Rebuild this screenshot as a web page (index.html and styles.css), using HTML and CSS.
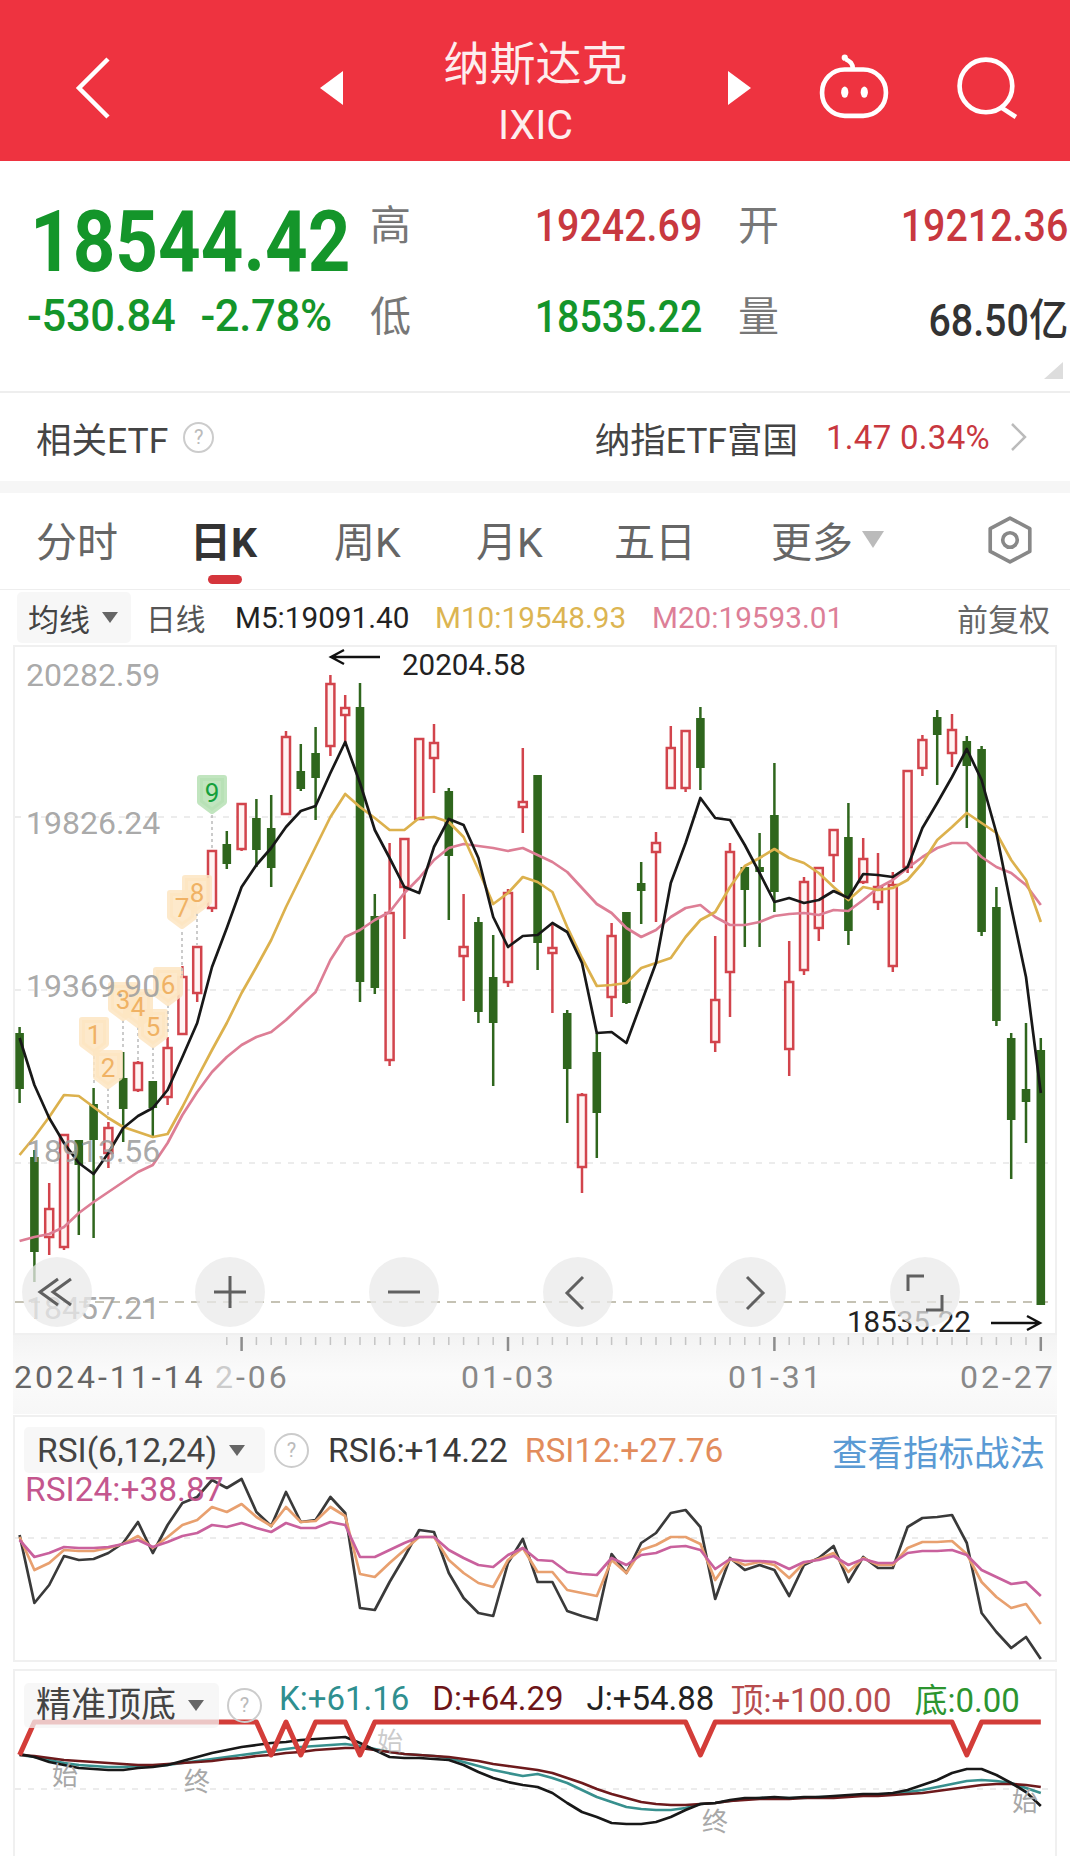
FILE: index.html
```html
<!DOCTYPE html>
<html lang="zh-CN">
<head>
    <meta charset="UTF-8">
    <meta name="viewport" content="width=device-width, initial-scale=1.0">
    <title>纳斯达克 IXIC</title>
    <link rel="stylesheet" href="styles.css">
</head>
<body>
    <header class="topbar">
        <div class="back">
            <svg width="36" height="62" viewBox="0 0 36 62"><path d="M33 2 L4 31 L33 60" class="icon-white"/></svg>
        </div>
        <div class="tri tri-left"></div>
        <div class="title">
            <div class="title-name">纳斯达克</div>
            <div class="title-code">IXIC</div>
        </div>
        <div class="tri tri-right"></div>
        <svg class="robot" width="70" height="65" viewBox="0 0 68 63">
            <rect x="3" y="15" width="62" height="45" rx="22" class="icon-white"/>
            <path d="M33 15 C33 9 30 7 26 5" class="icon-white"/>
            <circle cx="25" cy="3.5" r="3" fill="#fff"/>
            <ellipse cx="25" cy="37" rx="3.5" ry="5.5" fill="#fff"/>
            <ellipse cx="44" cy="37" rx="3.5" ry="5.5" fill="#fff"/>
        </svg>
        <svg class="search" width="62" height="62" viewBox="0 0 60 60">
            <circle cx="28" cy="28" r="25.5" class="icon-white"/>
            <path d="M43 49 L57 58" class="icon-white"/>
        </svg>
    </header>

    <section class="quote">
        <div class="price down"><span>18544.42</span></div>
        <div class="stat"><span class="stat-label">高</span><span class="stat-value up">19242.69</span></div>
        <div class="stat"><span class="stat-label">开</span><span class="stat-value up">19212.36</span></div>
        <div class="change down"><span>-530.84</span><span>-2.78%</span></div>
        <div class="stat"><span class="stat-label">低</span><span class="stat-value down">18535.22</span></div>
        <div class="stat"><span class="stat-label">量</span><span class="stat-value dark">68.50亿</span></div>
        <div class="corner"></div>
    </section>

    <section class="etf">
        <span class="etf-title">相关ETF</span>
        <span class="help"><i>?</i></span>
        <span class="etf-name">纳指ETF富国</span>
        <span class="etf-num up">1.47 0.34%</span>
        <svg width="17" height="30" viewBox="0 0 17 30"><path d="M2 2 L15 15 L2 28" class="icon-grey"/></svg>
    </section>

    <nav class="tabs">
        <span>分时</span>
        <span class="tab-on">日K</span>
        <span>周K</span>
        <span>月K</span>
        <span>五日</span>
        <span class="tab-more">更多<b class="caret caret-big"></b></span>
        <svg class="hex" width="50" height="50" viewBox="0 0 48 46">
            <path d="M24 2 L43 12 L43 34 L24 44 L5 34 L5 12 Z" class="icon-hex"/>
            <circle cx="24" cy="23" r="7" class="icon-hex"/>
        </svg>
    </nav>

    <div class="ma-bar">
        <span class="pill ma-pill">均线<b class="caret"></b></span>
        <span class="grey">日线</span>
        <span class="c-black">M5:19091.40</span>
        <span class="c-gold">M10:19548.93</span>
        <span class="c-pink">M20:19593.01</span>
        <span class="ma-right">前复权</span>
    </div>

    <div class="chart-box kline">
        <svg class="plot" viewBox="15 647 1040 686">
            <g class="grid">
                <line x1="15" x2="1055" y1="817" y2="817"/>
                <line x1="15" x2="1055" y1="990" y2="990"/>
                <line x1="15" x2="1055" y1="1163" y2="1163"/>
            </g>
            <line class="low-line" x1="15" x2="1055" y1="1302" y2="1302"/>
            <g id="candles"></g>
            <g id="badges"></g>
            <g id="maLines"></g>
            <g class="axis-label">
                <text x="26" y="686">20282.59</text>
                <text x="26" y="834">19826.24</text>
                <text x="26" y="997">19369.90</text>
                <text x="26" y="1162">18913.56</text>
                <text x="26" y="1319">18457.21</text>
            </g>
            <text class="mark-label" x="402" y="675">20204.58</text>
            <path class="arrow" d="M380 657 L331 657 M344 650 L331 657 L344 664"/>
            <text class="mark-label" x="847" y="1332">18535.22</text>
            <path class="arrow" d="M991 1323 L1040 1323 M1027 1316 L1040 1323 L1027 1330"/>

            <g class="zoom-btn">
                <circle cx="57" cy="1292" r="35"/>
                <path d="M58 1279 L40 1292 L58 1305 M71 1279 L53 1292 L71 1305"/>
            </g>
            <g class="zoom-btn">
                <circle cx="230" cy="1292" r="35"/>
                <path d="M214 1292 L246 1292 M230 1276 L230 1308"/>
            </g>
            <g class="zoom-btn">
                <circle cx="404" cy="1292" r="35"/>
                <path d="M388 1292 L420 1292"/>
            </g>
            <g class="zoom-btn">
                <circle cx="578" cy="1292" r="35"/>
                <path d="M583 1277 L567 1293 L583 1309"/>
            </g>
            <g class="zoom-btn">
                <circle cx="751" cy="1292" r="35"/>
                <path d="M747 1277 L763 1293 L747 1309"/>
            </g>
            <g class="zoom-btn">
                <circle cx="925" cy="1292" r="35"/>
                <path d="M908 1291 L908 1276 L924 1276 M942 1295 L942 1310 L926 1310"/>
            </g>
        </svg>
    </div>

    <div class="date-strip">
        <svg class="plot" viewBox="13 1335 1044 79">
            <g id="ticks"></g>
            <text class="date first" x="14" y="1388">2024-11-14</text>
            <text class="date" x="215" y="1388"><tspan class="date-fade">2</tspan>-06</text>
            <text class="date" x="461" y="1388">01-03</text>
            <text class="date" x="728" y="1388">01-31</text>
            <text class="date" x="960" y="1388">02-27</text>
        </svg>
    </div>

    <div class="chart-box rsi">
        <svg class="plot" viewBox="15 1417 1040 243">
            <line class="grid-line" x1="15" x2="1055" y1="1538" y2="1538"/>
            <g id="rsiLines"></g>
        </svg>
        <div class="legend">
            <span class="pill rsi-pill">RSI(6,12,24)<b class="caret"></b></span>
            <span class="help"><i>?</i></span>
            <span class="c-dark rsi-6">RSI6:+14.22</span>
            <span class="c-orange">RSI12:+27.76</span>
            <span class="link">查看指标战法</span>
        </div>
        <div class="rsi-24">RSI24:+38.87</div>
    </div>

    <div class="chart-box kd">
        <svg class="plot" viewBox="15 1671 1040 185">
            <line class="grid-line" x1="15" x2="1055" y1="1789" y2="1789"/>
            <g id="kdLines"></g>
            <g class="kd-tag">
                <text x="52" y="1785">始</text>
                <text x="184" y="1791">终</text>
                <text class="tag-faint" x="377" y="1751">始</text>
                <text x="702" y="1831">终</text>
                <text x="1012" y="1811">始</text>
            </g>
        </svg>
        <div class="legend kd-legend">
            <span class="pill kd-pill">精准顶底<b class="caret"></b></span>
            <span class="help"><i>?</i></span>
            <span class="c-teal">K:+61.16</span>
            <span class="c-maroon">D:+64.29</span>
            <span class="c-black">J:+54.88</span>
            <span class="c-top">顶:+100.00</span>
            <span class="c-bottom">底:0.00</span>
        </div>
    </div>

    <script src="chart.js"></script>
</body>
</html>
```

FILE: styles.css
```css
* {
    box-sizing: border-box;
}

html, body {
    margin: 0;
    padding: 0;
}

body {
    width: 1070px;
    height: 1856px;
    overflow: hidden;
    background-color: #fff;
    color: #333;
    font-family: Roboto, "Noto Sans CJK SC", sans-serif;
}

b, i {
    font-style: normal;
}

.up { color: #c8383f; }
.down { color: #14952a; }
.dark { color: #333; }
.grey { color: #555; }

.c-black { color: #222; }
.c-dark { color: #3a3a3a; }
.c-gold { color: #dcb552; }
.c-pink { color: #dd7f98; }
.c-orange { color: #e28c5c; }
.c-teal { color: #2f8f8f; }
.c-maroon { color: #6d1518; }
.c-top { color: #b74c4e; }
.c-bottom { color: #2c952f; }

/* top bar */
.topbar {
    height: 161px;
    display: flex;
    align-items: center;
    background-color: #ee3340;
    color: #fdeeee;
}

.back {
    width: 320px;
    padding: 14px 0 0 75px;
    display: flex;
}

.icon-white {
    fill: none;
    stroke: #fff;
    stroke-width: 4.5;
}

.tri {
    width: 0;
    height: 0;
    margin-top: 14px;
    border-top: 17px solid transparent;
    border-bottom: 17px solid transparent;
}

.tri-left {
    border-right: 23px solid #fff;
}

.tri-right {
    border-left: 23px solid #fff;
}

.title {
    width: 385px;
    align-self: flex-start;
    padding-top: 39px;
    text-align: center;
}

.title-name {
    font-size: 46px;
    line-height: 50px;
}

.title-code {
    font-size: 41px;
    line-height: 48px;
    margin-top: 12px;
}

.robot {
    margin-left: 68px;
    margin-top: 12px;
}

.search {
    margin-left: 68px;
    margin-top: 14px;
}

/* quote block */
.quote {
    position: relative;
    height: 232px;
    padding: 40px 2px 0 27px;
    display: grid;
    grid-template-columns: 307px 330px 328px;
    grid-template-rows: 50px 50px;
    column-gap: 38px;
    row-gap: 41px;
    border-bottom: 2px solid #eee;
}

.price {
    font-size: 86px;
    line-height: 82px;
    height: 50px;
    margin-left: 3px;
    font-weight: bold;
}

.price span {
    display: inline-block;
    transform: scaleX(0.865);
    transform-origin: left center;
}

.change {
    display: flex;
    gap: 25px;
    font-size: 43.5px;
    line-height: 50px;
    font-weight: 500;
    letter-spacing: -0.3px;
}

.stat {
    display: flex;
    justify-content: space-between;
    align-items: center;
}

.stat-label {
    margin: -8px 0 0 -2px;
    font-size: 41px;
    color: #777;
}

.stat-value {
    font-size: 44px;
    font-weight: 500;
    transform: scaleX(0.895);
    transform-origin: right center;
}

.corner {
    position: absolute;
    right: 7px;
    top: 201px;
    border-left: 19px solid transparent;
    border-bottom: 17px solid #ddd;
}

/* etf row */
.etf {
    height: 88px;
    padding: 0 43px 0 36px;
    display: flex;
    align-items: center;
    font-size: 35.5px;
    color: #444;
}

.help {
    width: 31px;
    height: 31px;
    border: 2px solid #ccc;
    border-radius: 50%;
    display: flex;
    align-items: center;
    justify-content: center;
    font-size: 20px;
    color: #bbb;
}

.etf .help {
    margin-left: 15px;
}

.etf-name {
    margin-left: auto;
}

.etf-num {
    margin: 0 20px 0 28px;
    font-size: 33px;
    letter-spacing: 0.3px;
}

.icon-grey {
    fill: none;
    stroke: #bbb;
    stroke-width: 2.5;
}

/* tabs */
.tabs {
    height: 109px;
    padding: 0 0 4px 36px;
    display: grid;
    grid-template-columns: 158px 140px 142px 138px 157px 217px 1fr;
    align-items: center;
    border-top: 12px solid #f6f6f6;
    border-bottom: 1px solid #eee;
    font-size: 41px;
    color: #666;
}

.tab-on {
    position: relative;
    margin-left: -4px;
    color: #333;
    font-weight: bold;
}

.tab-on::after {
    content: "";
    position: absolute;
    left: 18px;
    top: 66px;
    width: 34px;
    height: 9px;
    border-radius: 5px;
    background-color: #d5353c;
}

.tab-more {
    display: flex;
    align-items: center;
}

.caret {
    display: inline-block;
    margin-left: 12px;
    border-left: 8px solid transparent;
    border-right: 8px solid transparent;
    border-top: 11px solid #666;
}

.caret-big {
    margin-left: 9px;
    border-left-width: 11px;
    border-right-width: 11px;
    border-top: 17px solid #bbb;
}

.hex {
    margin: 2px 0 0 -3px;
}

.icon-hex {
    fill: none;
    stroke: #888;
    stroke-width: 3.5;
    stroke-linejoin: round;
}

/* moving average bar */
.ma-bar {
    height: 55px;
    padding: 1px 20px 2px 17px;
    display: grid;
    grid-template-columns: 129px 89px 200px 217px 1fr auto;
    align-items: center;
    font-size: 29.7px;
}

.pill {
    display: flex;
    align-items: center;
    border-radius: 5px;
    background-color: rgba(244, 244, 244, 0.75);
    color: #444;
}

.ma-pill {
    width: 114px;
    height: 51px;
    padding-left: 11px;
    font-size: 31px;
}

.ma-right {
    font-size: 31px;
    color: #666;
}

/* chart boxes */
.chart-box {
    position: relative;
    margin: 0 13px;
    border: 2px solid #f0f0f0;
}

.plot {
    position: absolute;
    left: 0;
    top: 0;
    width: 100%;
    height: 100%;
    overflow: visible;
}

.kline {
    height: 690px;
}

.grid line, .grid-line {
    stroke: #e6e6e6;
    stroke-width: 1.5;
    stroke-dasharray: 6 7;
}

.low-line {
    stroke: #b3ae9c;
    stroke-width: 1.5;
    stroke-dasharray: 9 7;
}

.wick-up, .body-up {
    stroke: #d2444c;
}

.wick-up, .wick-down {
    stroke-width: 2.5;
}

.body-up {
    fill: #fff4f3;
    stroke-width: 2.5;
}

.wick-down {
    stroke: #2f661d;
}

.body-down {
    fill: #2f661d;
}

.line {
    fill: none;
    stroke-width: 2.7;
    stroke-linejoin: round;
}

.ma5, .rsi6, .kd-j { stroke: #181818; }
.ma10 { stroke: #dcb14d; }
.ma20 { stroke: #dd7e95; }
.rsi6 { stroke: #3a3a3a; }
.rsi12 { stroke: #e8a06f; }
.rsi24 { stroke: #c9619d; }
.kd-k { stroke: #38908e; }
.kd-d { stroke: #6d1a1c; }

.kd-top {
    fill: none;
    stroke: #d33d39;
    stroke-width: 5;
}

.axis-label text {
    font-size: 32px;
    fill: #9e9e9e;
    fill-opacity: 0.9;
}

.mark-label {
    font-size: 29.5px;
    fill: #222;
}

.arrow {
    fill: none;
    stroke: #111;
    stroke-width: 2.4;
}

.zoom-btn circle {
    fill: #e9e9e9;
    fill-opacity: 0.75;
}

.zoom-btn path {
    fill: none;
    stroke: #606060;
    stroke-width: 3;
}

.badge-box {
    fill: #fde5c2;
    fill-opacity: 0.85;
    stroke: #fde5c2;
    stroke-opacity: 0.85;
    stroke-width: 6;
    stroke-linejoin: round;
}

.badge-num {
    font-size: 26px;
    fill: #f0b264;
    text-anchor: middle;
}

.badge-line {
    stroke: #bbb;
    stroke-width: 1.5;
    stroke-dasharray: 3 3;
}

.badge-green.badge-box {
    fill: #b6e0b4;
    stroke: #b6e0b4;
}

.badge-green.badge-num {
    fill: #14a03a;
}

/* date axis */
.date-strip {
    position: relative;
    height: 79px;
    margin: 0 13px;
    background: linear-gradient(to bottom, #f3f3f3 0, #fbfbfb 50%, #f7f7f7 100%);
}

.tick {
    stroke: #c4c4c4;
    stroke-width: 1.5;
}

.tick-big {
    stroke: #8c8c8c;
    stroke-width: 2.5;
}

.date {
    font-size: 32px;
    letter-spacing: 3px;
    fill: #888;
}

.date.first {
    fill: #666;
}

.date-fade {
    fill: #ccc;
}

/* indicators */
.rsi {
    height: 247px;
    margin-top: 1px;
}

.legend {
    position: relative;
    height: 46px;
    margin-top: 10px;
    padding-left: 9px;
    display: flex;
    align-items: center;
    font-size: 33.5px;
    white-space: nowrap;
}

.legend .help {
    width: 35px;
    height: 35px;
    margin-left: 9px;
}

.rsi-pill {
    width: 241px;
    height: 46px;
    padding-left: 13px;
    font-size: 33.5px;
}

.rsi-6 {
    margin-left: 19px;
    margin-right: 17px;
}

.link {
    margin-left: auto;
    margin-right: 10px;
    font-size: 35.5px;
    color: #5a9ad4;
}

.rsi-24 {
    position: absolute;
    left: 10px;
    top: 55px;
    font-size: 33.5px;
    line-height: 36px;
    color: #c4568e;
}

.kd {
    height: 187px;
    margin-top: 7px;
    border-bottom: 0;
}

.kd-legend {
    margin-top: 11px;
    font-size: 33px;
}

.kd-legend span:nth-child(n+3) {
    margin-bottom: 14px;
}

.kd-legend span:nth-child(n+4) {
    margin-left: 23px;
}

.kd-legend .c-teal {
    margin-left: 17px;
}

.kd-legend span.c-top {
    margin-left: 16px;
}

.kd-pill {
    width: 195px;
    height: 45px;
    padding-left: 12px;
    font-size: 35px;
    line-height: 45px;
}

.kd-legend .help {
    margin-left: 8px;
}

.kd-tag text {
    font-size: 26px;
    fill: #a8a8a8;
}

.kd-tag .tag-faint {
    fill-opacity: 0.6;
}
```

FILE: chart.js
```javascript
const STEP = 14.8;
const START = 19.6;

// wick top, body top, body bottom, wick bottom, u = red, d = green
const candles = [
    [1027, 1033, 1089, 1103, 'd'], [1150, 1157, 1252, 1282, 'd'], [1183, 1209, 1237, 1255, 'u'],
    [1135, 1135, 1247, 1250, 'u'], [1140, 1140, 1165, 1235, 'd'], [1088, 1104, 1140, 1238, 'd'],
    [1122, 1128, 1153, 1168, 'u'], [1052, 1078, 1109, 1142, 'd'], [1061, 1063, 1090, 1092, 'u'],
    [1081, 1081, 1108, 1137, 'd'], [1037, 1048, 1097, 1105, 'u'], [966, 977, 1034, 1034, 'u'],
    [947, 947, 993, 1002, 'u'], [850, 851, 908, 912, 'u'], [831, 844, 864, 869, 'd'],
    [804, 804, 849, 851, 'u'], [799, 818, 850, 867, 'd'], [795, 828, 868, 887, 'd'],
    [731, 737, 814, 814, 'u'], [744, 771, 789, 791, 'd'], [727, 753, 778, 820, 'd'],
    [675, 684, 746, 756, 'u'], [695, 708, 715, 743, 'u'], [683, 707, 982, 1002, 'd'],
    [894, 916, 988, 994, 'd'], [843, 913, 1060, 1066, 'u'], [839, 839, 887, 939, 'u'],
    [739, 739, 819, 819, 'u'], [724, 743, 758, 793, 'u'], [788, 791, 856, 920, 'd'],
    [894, 947, 956, 1001, 'u'], [917, 922, 1012, 1023, 'd'], [935, 977, 1023, 1086, 'd'],
    [889, 893, 982, 987, 'u'], [748, 802, 807, 833, 'u'], [775, 775, 943, 970, 'd'],
    [925, 948, 953, 1013, 'u'], [1010, 1013, 1069, 1123, 'd'], [1093, 1095, 1167, 1193, 'u'],
    [1033, 1052, 1113, 1158, 'd'], [923, 936, 997, 1017, 'u'], [912, 912, 1003, 1004, 'd'],
    [862, 883, 891, 924, 'd'], [832, 843, 852, 922, 'u'], [726, 748, 788, 788, 'u'],
    [731, 731, 788, 792, 'u'], [707, 718, 768, 790, 'd'], [936, 1000, 1042, 1052, 'u'],
    [843, 852, 972, 1017, 'u'], [866, 867, 890, 947, 'd'], [833, 867, 872, 947, 'd'],
    [763, 815, 892, 912, 'd'], [941, 982, 1049, 1076, 'u'], [877, 882, 970, 975, 'u'],
    [868, 868, 928, 941, 'u'], [830, 830, 855, 882, 'u'], [803, 837, 931, 945, 'd'],
    [838, 859, 882, 884, 'u'], [853, 887, 902, 910, 'u'], [872, 885, 966, 972, 'u'],
    [771, 771, 867, 873, 'u'], [735, 740, 768, 776, 'u'], [710, 717, 735, 785, 'd'],
    [714, 730, 753, 767, 'u'], [736, 741, 766, 828, 'd'], [746, 749, 932, 936, 'd'],
    [887, 907, 1021, 1026, 'd'], [1033, 1038, 1120, 1179, 'd'], [1023, 1089, 1102, 1143, 'd'],
    [1038, 1050, 1305, 1305, 'd']
];

const ma5 = [1038, 1085, 1118, 1143, 1163, 1174, 1153, 1128, 1116, 1108, 1090, 1057, 1023, 967, 928, 887, 865, 848, 827, 811, 806, 773, 742, 783, 830, 858, 887, 893, 847, 819, 825, 858, 917, 947, 936, 935, 923, 932, 963, 1033, 1032, 1043, 1003, 963, 883, 843, 798, 818, 820, 845, 873, 902, 898, 903, 900, 891, 898, 874, 875, 877, 867, 828, 803, 777, 749, 780, 833, 907, 977, 1093];
const ma10 = [1155, 1137, 1117, 1095, 1096, 1107, 1118, 1127, 1132, 1137, 1134, 1107, 1078, 1050, 1023, 993, 967, 940, 907, 877, 847, 817, 794, 807, 818, 830, 830, 818, 817, 822, 837, 870, 904, 893, 877, 882, 892, 927, 958, 986, 985, 983, 968, 963, 958, 937, 920, 912, 887, 866, 858, 849, 858, 863, 873, 887, 900, 887, 890, 888, 880, 863, 840, 827, 813, 823, 833, 860, 880, 922];
const ma20 = [1241, 1237, 1234, 1227, 1213, 1202, 1192, 1182, 1172, 1165, 1143, 1115, 1092, 1072, 1057, 1045, 1037, 1032, 1020, 1006, 992, 960, 937, 930, 920, 912, 893, 878, 860, 848, 844, 846, 848, 851, 848, 855, 862, 872, 888, 904, 913, 928, 937, 930, 917, 908, 905, 917, 925, 925, 922, 916, 914, 913, 915, 910, 911, 900, 888, 880, 868, 857, 848, 843, 843, 857, 867, 873, 885, 905];

const rsi6 = [1535, 1603, 1585, 1556, 1560, 1559, 1553, 1543, 1522, 1553, 1525, 1503, 1497, 1480, 1488, 1479, 1512, 1526, 1492, 1522, 1520, 1497, 1513, 1608, 1610, 1582, 1557, 1530, 1532, 1573, 1598, 1613, 1616, 1563, 1539, 1582, 1582, 1611, 1616, 1620, 1554, 1573, 1543, 1533, 1513, 1510, 1527, 1599, 1558, 1570, 1565, 1570, 1596, 1565, 1558, 1546, 1582, 1557, 1568, 1568, 1527, 1518, 1517, 1515, 1543, 1613, 1632, 1648, 1637, 1659];
const rsi12 = [1537, 1570, 1563, 1550, 1551, 1551, 1548, 1544, 1536, 1548, 1537, 1525, 1520, 1507, 1512, 1504, 1517, 1526, 1507, 1522, 1521, 1507, 1516, 1574, 1577, 1563, 1550, 1537, 1537, 1560, 1573, 1583, 1587, 1560, 1548, 1572, 1572, 1590, 1593, 1596, 1560, 1573, 1550, 1545, 1537, 1537, 1544, 1580, 1559, 1565, 1562, 1565, 1578, 1563, 1559, 1553, 1572, 1558, 1565, 1565, 1548, 1542, 1542, 1541, 1554, 1582, 1597, 1608, 1604, 1624];
const rsi24 = [1540, 1557, 1553, 1547, 1548, 1548, 1547, 1544, 1540, 1547, 1542, 1536, 1533, 1525, 1527, 1523, 1528, 1532, 1523, 1528, 1528, 1522, 1525, 1557, 1557, 1550, 1543, 1537, 1537, 1550, 1558, 1565, 1567, 1555, 1548, 1560, 1561, 1572, 1574, 1575, 1558, 1565, 1555, 1553, 1547, 1546, 1550, 1569, 1559, 1561, 1561, 1562, 1569, 1562, 1560, 1556, 1565, 1559, 1563, 1563, 1553, 1551, 1551, 1550, 1555, 1570, 1577, 1584, 1582, 1596];

const kdJ = [1754, 1757, 1762, 1765, 1768, 1769, 1770, 1770, 1768, 1767, 1765, 1761, 1757, 1753, 1750, 1747, 1745, 1743, 1742, 1740, 1739, 1738, 1737, 1743, 1750, 1757, 1758, 1758, 1759, 1760, 1765, 1772, 1778, 1782, 1785, 1787, 1793, 1803, 1812, 1817, 1823, 1824, 1824, 1822, 1817, 1810, 1804, 1803, 1800, 1798, 1798, 1797, 1798, 1797, 1797, 1796, 1795, 1794, 1794, 1793, 1790, 1785, 1780, 1773, 1769, 1769, 1775, 1783, 1792, 1806];
const kdK = [1755, 1757, 1760, 1763, 1765, 1766, 1767, 1767, 1766, 1766, 1765, 1763, 1761, 1759, 1757, 1755, 1753, 1751, 1749, 1747, 1746, 1745, 1744, 1746, 1749, 1752, 1754, 1755, 1756, 1758, 1762, 1766, 1770, 1773, 1776, 1774, 1778, 1783, 1790, 1797, 1802, 1807, 1809, 1810, 1810, 1808, 1804, 1803, 1801, 1799, 1798, 1798, 1798, 1798, 1797, 1797, 1796, 1795, 1795, 1794, 1792, 1790, 1787, 1784, 1781, 1780, 1781, 1783, 1788, 1793];
const kdD = [1755, 1756, 1758, 1760, 1761, 1762, 1763, 1764, 1765, 1765, 1764, 1763, 1762, 1761, 1759, 1758, 1756, 1755, 1753, 1752, 1750, 1749, 1748, 1748, 1750, 1752, 1754, 1755, 1756, 1757, 1759, 1761, 1764, 1766, 1768, 1770, 1773, 1778, 1783, 1789, 1794, 1798, 1802, 1804, 1805, 1805, 1804, 1803, 1801, 1800, 1799, 1799, 1799, 1798, 1798, 1798, 1797, 1796, 1796, 1795, 1794, 1793, 1791, 1789, 1787, 1785, 1784, 1784, 1785, 1787];

// number, badge centre x, y, dashed line from y to y
const badges = [
    ['1', 94, 1035, 1056, 1086], ['2', 108, 1068, 1088, 1120], ['3', 123, 1000, 1020, 1050],
    ['4', 138, 1007, 1027, 1061], ['5', 153, 1027, 1047, 1079], ['6', 168, 985, 1005, 1035],
    ['7', 182, 908, 932, 975], ['8', 197, 893, 913, 945], ['9', 212, 793, 815, 850]
];

function xOf(i) {
    return START + STEP * i;
}

function drawCandles() {
    let html = '';
    candles.forEach((c, i) => {
        const x = xOf(i).toFixed(1);
        const type = c[4] === 'u' ? 'up' : 'down';
        html += `<line class="wick-${type}" x1="${x}" x2="${x}" y1="${c[0]}" y2="${c[3]}"/>`;
        const w = c[4] === 'u' ? 8 : 8.6;
        html += `<rect class="body-${type}" x="${(xOf(i) - w / 2).toFixed(1)}" y="${c[1]}" width="${w}" height="${c[2] - c[1]}"/>`;
    });
    document.getElementById('candles').innerHTML = html;
}

function drawBadges() {
    let boxes = '';
    let nums = '';
    badges.forEach(b => {
        const [num, x, y, from, to] = b;
        const green = num === '9' ? ' badge-green' : '';
        boxes += `<line class="badge-line" x1="${x}" x2="${x}" y1="${from}" y2="${to}"/>`;
        boxes += `<polygon class="badge-box${green}" points="${x - 12},${y - 15} ${x + 12},${y - 15} ${x + 12},${y + 9} ${x},${y + 18} ${x - 12},${y + 9}"/>`;
        nums += `<text class="badge-num${green}" x="${x}" y="${y + 9}">${num}</text>`;
    });
    document.getElementById('badges').innerHTML = boxes + nums;
}

function polyline(values, cls) {
    const pts = values.map((y, i) => `${xOf(i).toFixed(1)},${y}`).join(' ');
    return `<polyline class="line ${cls}" points="${pts}"/>`;
}

function drawLines() {
    document.getElementById('maLines').innerHTML =
        polyline(ma20, 'ma20') + polyline(ma10, 'ma10') + polyline(ma5, 'ma5');
    document.getElementById('rsiLines').innerHTML =
        polyline(rsi6, 'rsi6') + polyline(rsi12, 'rsi12') + polyline(rsi24, 'rsi24');

    // top line stays at 1722 except the dips
    const dips = [0, 17, 19, 23, 46, 64];
    const top = candles.map((c, i) => dips.includes(i) ? 1755 : 1722);
    document.getElementById('kdLines').innerHTML =
        polyline(kdK, 'kd-k') + polyline(kdD, 'kd-d') + polyline(kdJ, 'kd-j') +
        polyline(top, 'kd-top');
}

function drawTicks() {
    let html = '';
    const big = [15, 33, 51, 69];
    for (let i = 14; i < candles.length; i++) {
        const x = xOf(i).toFixed(1);
        if (big.includes(i)) {
            html += `<line class="tick-big" x1="${x}" x2="${x}" y1="1337" y2="1351"/>`;
        } else {
            html += `<line class="tick" x1="${x}" x2="${x}" y1="1337" y2="1345"/>`;
        }
    }
    document.getElementById('ticks').innerHTML = html;
}

drawCandles();
drawBadges();
drawLines();
drawTicks();
```
